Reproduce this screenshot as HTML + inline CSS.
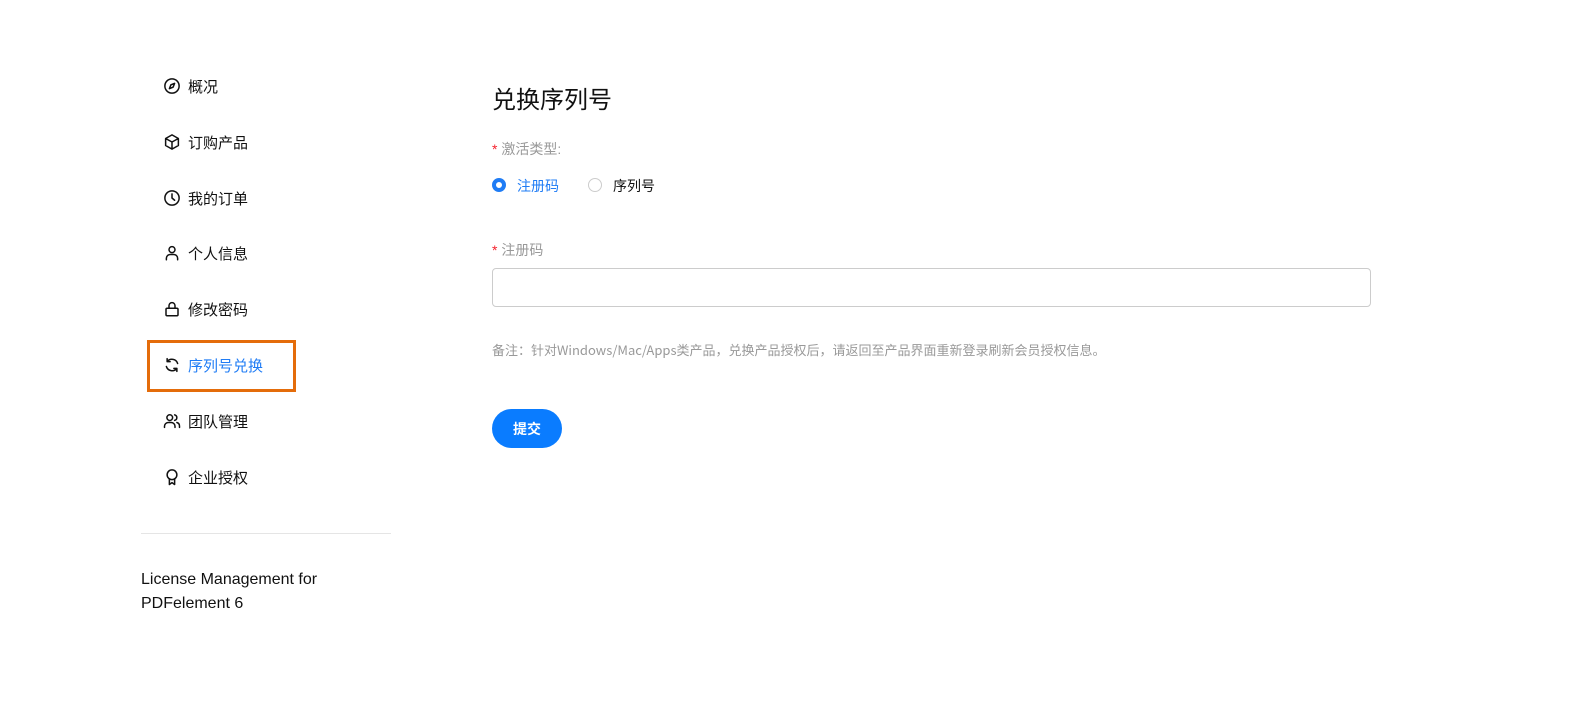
<!DOCTYPE html>
<html><head><meta charset="utf-8"><style>
*{margin:0;padding:0;box-sizing:border-box}
body{width:1571px;height:704px;background:#fff;font-family:"Liberation Sans","Noto Sans CJK SC",sans-serif;color:#111;position:relative;overflow:hidden}
.nav{position:absolute;left:163px;font-size:15px;display:flex;align-items:center;height:22px}
.nav svg{width:18px;height:18px;margin-right:7px;fill:none;stroke:#111;stroke-width:2;stroke-linecap:round;stroke-linejoin:round}
.abs{position:absolute}
</style></head><body>
<div class="nav" style="top:75px"><svg viewBox="0 0 24 24"><circle cx="12" cy="12" r="9.5"/><path d="M15.5 8.5l-2 5-5 2 2-5z"/></svg>概况</div>
<div class="nav" style="top:131px"><svg viewBox="0 0 24 24"><path d="M12 2.5l8.5 4.8v9.4L12 21.5l-8.5-4.8V7.3z M3.5 7.3L12 12l8.5-4.7 M12 12v9.5"/></svg>订购产品</div>
<div class="nav" style="top:187px"><svg viewBox="0 0 24 24"><circle cx="12" cy="12" r="9.5"/><path d="M12 6.5V12l3.5 3"/></svg>我的订单</div>
<div class="nav" style="top:242px"><svg viewBox="0 0 24 24"><circle cx="12" cy="7.5" r="4"/><path d="M4.5 21v-2a5 5 0 015-5h5a5 5 0 015 5v2"/></svg>个人信息</div>
<div class="nav" style="top:298px"><svg viewBox="0 0 24 24"><rect x="4" y="11" width="16" height="10" rx="1.5"/><path d="M8 11V7.5a4 4 0 018 0V11"/></svg>修改密码</div>
<div class="abs" style="left:147px;top:340px;width:149px;height:52px;border:3px solid #e46c0a"></div>
<div class="nav" style="top:354px;color:#1f7cf5"><svg viewBox="0 0 24 24"><path d="M19.5 10A8 8 0 005.5 7.5M4.5 14a8 8 0 0014 2.5 M5.5 3.5v4h4 M18.5 20.5v-4h-4"/></svg>序列号兑换</div>
<div class="nav" style="top:410px"><svg viewBox="0 0 24 24"><circle cx="9" cy="7.5" r="3.8"/><path d="M2 20.5v-1.5a5 5 0 015-5h4a5 5 0 015 5v1.5 M15.5 3.8a3.8 3.8 0 010 7.4 M18.5 14a5 5 0 013.5 5v1.5"/></svg>团队管理</div>
<div class="nav" style="top:466px"><svg viewBox="0 0 24 24"><circle cx="12" cy="9" r="6.5"/><path d="M8.5 14.5V22l3.5-2.5 3.5 2.5v-7.5"/></svg>企业授权</div>
<div class="abs" style="left:141px;top:533px;width:250px;height:1px;background:#e5e5e5"></div>
<div class="abs" style="left:141px;top:568px;font-size:16px;line-height:24px;color:#111">License Management for<br>PDFelement 6</div>

<div class="abs" style="left:492px;top:80px;font-size:24px;color:#111">兑换序列号</div>
<div class="abs" style="left:492px;top:139px;font-size:14px;color:#999"><span style="color:#f5222d">*</span> 激活类型:</div>
<div class="abs" style="left:492px;top:178px;width:14px;height:14px;border-radius:50%;border:4.5px solid #1f7cf5;background:#fff"></div>
<div class="abs" style="left:517px;top:176px;font-size:14px;color:#1f7cf5">注册码</div>
<div class="abs" style="left:588px;top:178px;width:14px;height:14px;border-radius:50%;border:1px solid #ccc"></div>
<div class="abs" style="left:613px;top:176px;font-size:14px;color:#111">序列号</div>
<div class="abs" style="left:492px;top:240px;font-size:14px;color:#999"><span style="color:#f5222d">*</span> 注册码</div>
<div class="abs" style="left:492px;top:268px;width:879px;height:39px;border:1px solid #ccc;border-radius:4px"></div>
<div class="abs" style="left:492px;top:340px;font-size:13px;color:#999;font-family:'Noto Sans CJK SC',sans-serif">备注：针对Windows/Mac/Apps类产品，兑换产品授权后，请返回至产品界面重新登录刷新会员授权信息。</div>
<div class="abs" style="left:492px;top:409px;width:70px;height:39px;border-radius:20px;background:#0a7cff;color:#fff;font-size:14px;font-weight:bold;display:flex;align-items:center;justify-content:center">提交</div>
</body></html>
